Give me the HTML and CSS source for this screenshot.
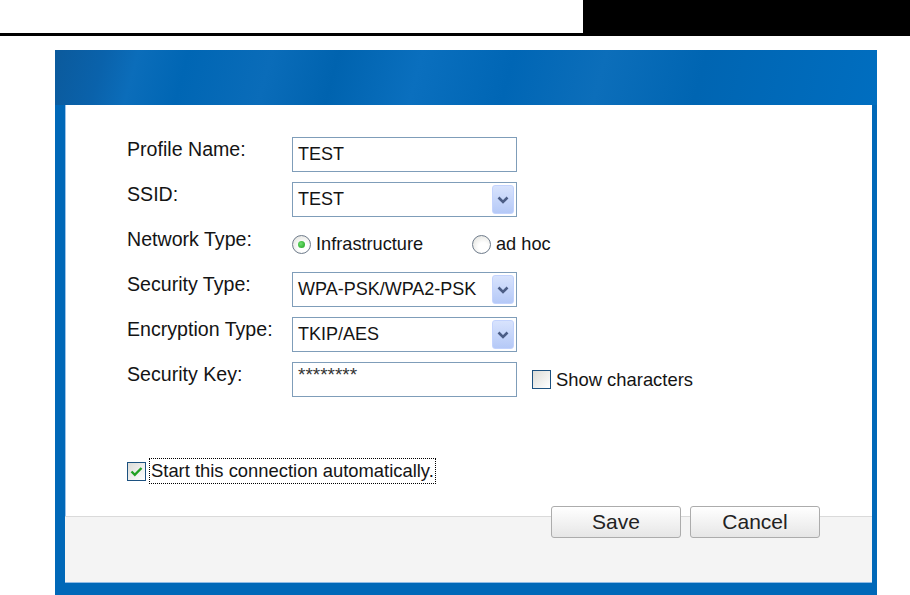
FILE: index.html
```html
<!DOCTYPE html>
<html lang="en">
<head>
  <meta charset="UTF-8">
  <meta name="viewport" content="width=device-width, initial-scale=1.0">
  <title>Profile Settings</title>
  <link rel="stylesheet" href="styles.css">
</head>
<body>
  <!-- Page header rule -->
  <div class="page-top">
    <div class="page-rule"></div>
    <div class="page-tab"></div>
  </div>

  <!-- Profile dialog -->
  <div class="dialog">
    <div class="dialog-head"></div>

    <div class="dialog-body">
      <div class="form">
        <div class="form-label">Profile Name:</div>
        <div class="form-field">
          <div class="text-box">TEST</div>
        </div>

        <div class="form-label">SSID:</div>
        <div class="form-field">
          <div class="combo">
            <span class="combo-value">TEST</span>
            <span class="combo-button">
              <svg width="12" height="8" viewBox="0 0 12 8" fill="none" xmlns="http://www.w3.org/2000/svg">
                <path d="M1.5 1.5L6 6L10.5 1.5" stroke="#4b5d86" stroke-width="2.6"/>
              </svg>
            </span>
          </div>
        </div>

        <div class="form-label">Network Type:</div>
        <div class="form-field radios">
          <label class="radio-option">
            <span class="radio checked"></span>Infrastructure
          </label>
          <label class="radio-option">
            <span class="radio"></span>ad hoc
          </label>
        </div>

        <div class="form-label">Security Type:</div>
        <div class="form-field">
          <div class="combo">
            <span class="combo-value">WPA-PSK/WPA2-PSK</span>
            <span class="combo-button">
              <svg width="12" height="8" viewBox="0 0 12 8" fill="none" xmlns="http://www.w3.org/2000/svg">
                <path d="M1.5 1.5L6 6L10.5 1.5" stroke="#4b5d86" stroke-width="2.6"/>
              </svg>
            </span>
          </div>
        </div>

        <div class="form-label">Encryption Type:</div>
        <div class="form-field">
          <div class="combo">
            <span class="combo-value">TKIP/AES</span>
            <span class="combo-button">
              <svg width="12" height="8" viewBox="0 0 12 8" fill="none" xmlns="http://www.w3.org/2000/svg">
                <path d="M1.5 1.5L6 6L10.5 1.5" stroke="#4b5d86" stroke-width="2.6"/>
              </svg>
            </span>
          </div>
        </div>

        <div class="form-label">Security Key:</div>
        <div class="form-field key-row">
          <div class="text-box password">********</div>
          <label class="check-option">
            <span class="checkbox"></span>Show characters
          </label>
        </div>
      </div>

      <label class="check-option auto-start">
        <span class="checkbox checked">
          <svg width="13" height="11" viewBox="0 0 13 11" fill="none" xmlns="http://www.w3.org/2000/svg">
            <path d="M1.5 5.5L4.8 8.8L11.5 2" stroke="#21a121" stroke-width="2.4"/>
          </svg>
        </span>
        <span class="focus-text">Start this connection automatically.</span>
      </label>
    </div>

    <div class="dialog-foot">
      <button class="btn">Save</button>
      <button class="btn">Cancel</button>
    </div>
  </div>
</body>
</html>
```

FILE: styles.css
```css
:root {
  --frame-blue: #0068b8;
  --field-border: #7f9db9;
  --text-color: #141414;
}

* {
  margin: 0;
  padding: 0;
  box-sizing: border-box;
}

body {
  width: 910px;
  height: 595px;
  overflow: hidden;
  background: #ffffff;
  font-family: "Liberation Sans", Arial, sans-serif;
  color: var(--text-color);
}

/* Page header */
.page-top {
  display: flex;
  height: 36px;
}

.page-rule {
  width: 583px;
  border-bottom: 3px solid #000000;
}

.page-tab {
  flex: 1;
  background: #000000;
}

/* Dialog frame */
.dialog {
  margin: 14px 0 0 55px;
  width: 822px;
  height: 545px;
  background: var(--frame-blue);
  padding: 0 5px 12px 10px;
  display: flex;
  flex-direction: column;
}

.dialog-head {
  height: 55px;
  margin-left: -10px;
  margin-right: -5px;
  background: linear-gradient(105deg,
    #0b5a9c 0%, #0a62ab 6%, #0b6dba 10%, #0066b4 16%,
    #0a6cb9 26%, #0063af 34%, #0a6fbe 44%, #0066b5 55%,
    #0c6eba 66%, #0065b2 78%, #006ec0 100%);
}

.dialog-body {
  flex: 1;
  background: #ffffff;
  border-left: 1px solid #9cc3ea;
  padding: 32px 0 0 61px;
  display: flex;
  flex-direction: column;
}

/* Form grid */
.form {
  display: grid;
  grid-template-columns: 165px auto;
  row-gap: 10px;
  align-items: start;
}

.form-label {
  font-size: 19.6px;
  line-height: 22px;
  padding-top: 1px;
}

.form-field {
  height: 35px;
  display: flex;
  align-items: center;
}

.text-box {
  width: 225px;
  height: 35px;
  border: 1px solid var(--field-border);
  font-size: 18px;
  line-height: 33px;
  padding-left: 5px;
  background: #ffffff;
}

.text-box.password {
  font-size: 19px;
  line-height: 20px;
  padding-top: 2px;
  color: #333333;
}

.combo {
  width: 225px;
  height: 35px;
  border: 1px solid var(--field-border);
  display: flex;
  align-items: center;
  justify-content: space-between;
  padding: 2px 2px 2px 5px;
  font-size: 18px;
}

.combo-button {
  width: 22px;
  height: 29px;
  border: 1px solid #c3d3fd;
  border-radius: 3px;
  background: linear-gradient(#d8e3fd, #b5c9f7);
  display: flex;
  align-items: center;
  justify-content: center;
}

/* Radios */
.radio-option {
  display: flex;
  align-items: center;
  font-size: 18.2px;
  width: 180px;
}

.radio {
  width: 19px;
  height: 19px;
  border-radius: 50%;
  border: 1px solid #6f7c8c;
  background: radial-gradient(circle at 60% 65%, #ffffff 30%, #dcdcd6 100%);
  margin-right: 5px;
  display: flex;
  align-items: center;
  justify-content: center;
}

.radio.checked::after {
  content: "";
  width: 7px;
  height: 7px;
  border-radius: 50%;
  background: radial-gradient(circle at 40% 40%, #6ee06e, #1e9e1e);
}

/* Checkboxes */
.key-row {
  gap: 15px;
}

.check-option {
  display: flex;
  align-items: center;
  font-size: 18.4px;
}

.checkbox {
  width: 19px;
  height: 19px;
  border: 1px solid #1c5180;
  background: linear-gradient(135deg, #dcdcd7, #ffffff);
  margin-right: 5px;
  display: flex;
  align-items: center;
  justify-content: center;
}

.auto-start {
  margin-top: 62px;
}

.focus-text {
  outline: 1px dotted #000000;
  line-height: 24px;
  padding: 0 1px;
  margin-left: -1px;
}

/* Footer */
.dialog-foot {
  height: 67px;
  background: #f4f4f4;
  border-top: 1px solid #dadada;
  border-bottom: 1px solid #8fbbe6;
  display: flex;
  justify-content: flex-end;
  align-items: flex-start;
  gap: 9px;
  padding-right: 52px;
}

.btn {
  width: 130px;
  height: 32px;
  margin-top: -11px;
  border: 1px solid #acacac;
  border-radius: 3px;
  background: linear-gradient(#ffffff, #f0f0f0 60%, #e6e6e6);
  font-family: "Liberation Sans", Arial, sans-serif;
  font-size: 21px;
  color: #222222;
}
```
